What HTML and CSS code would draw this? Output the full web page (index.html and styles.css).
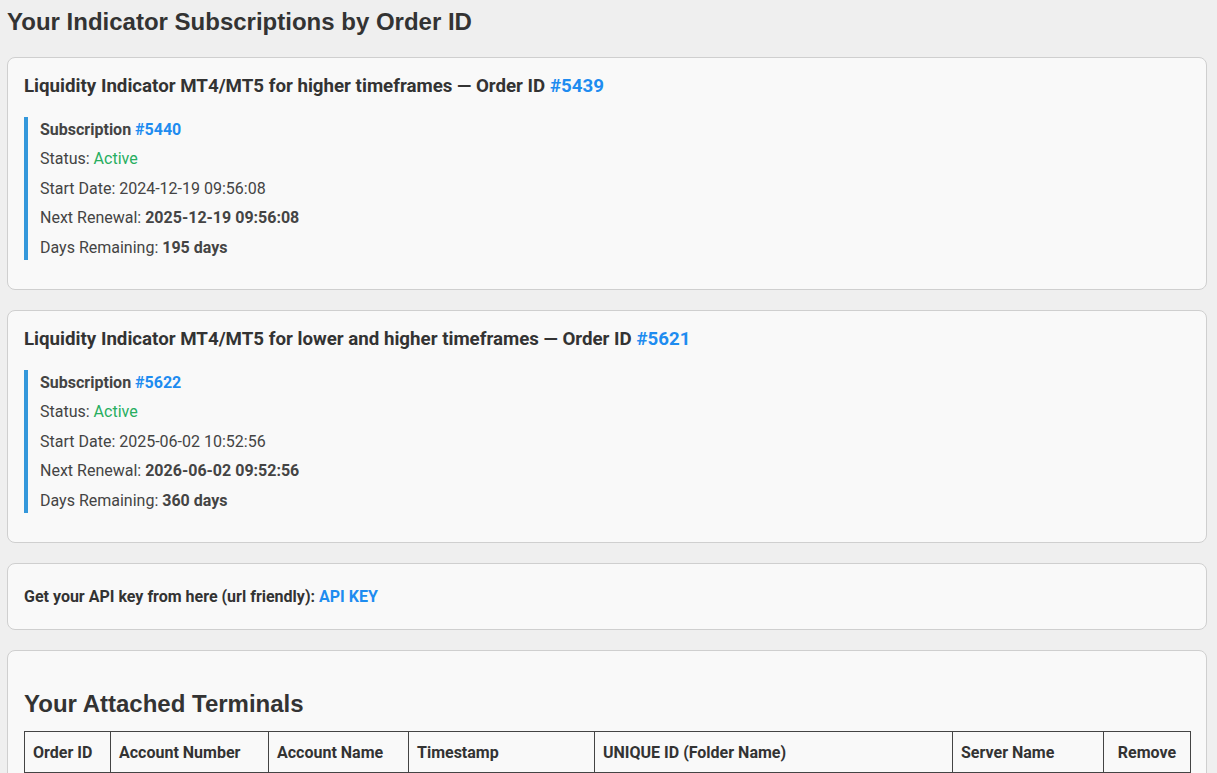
FILE: index.html
```html
<!DOCTYPE html>
<html lang="en">
<head>
<meta charset="utf-8">
<title>Your Indicator Subscriptions by Order ID</title>
<link rel="stylesheet" href="styles.css">
</head>
<body>
<div class="page">
  <h1 class="page-title">Your Indicator Subscriptions by Order ID</h1>

  <section class="card order">
    <h3 class="order-title">Liquidity Indicator MT4/MT5 for higher timeframes — Order ID <a href="#" class="link">#5439</a></h3>
    <div class="sub">
      <p class="line"><strong>Subscription <a href="#" class="link">#5440</a></strong></p>
      <p class="line">Status: <span class="active">Active</span></p>
      <p class="line">Start Date: 2024-12-19 09:56:08</p>
      <p class="line">Next Renewal: <strong>2025-12-19 09:56:08</strong></p>
      <p class="line">Days Remaining: <strong>195 days</strong></p>
    </div>
  </section>

  <section class="card order">
    <h3 class="order-title">Liquidity Indicator MT4/MT5 for lower and higher timeframes — Order ID <a href="#" class="link">#5621</a></h3>
    <div class="sub">
      <p class="line"><strong>Subscription <a href="#" class="link">#5622</a></strong></p>
      <p class="line">Status: <span class="active">Active</span></p>
      <p class="line">Start Date: 2025-06-02 10:52:56</p>
      <p class="line">Next Renewal: <strong>2026-06-02 09:52:56</strong></p>
      <p class="line">Days Remaining: <strong>360 days</strong></p>
    </div>
  </section>

  <section class="card api">
    <p class="api-text"><strong>Get your API key from here (url friendly): <a href="#" class="link">API KEY</a></strong></p>
  </section>

  <section class="card terminals">
    <h2 class="section-title">Your Attached Terminals</h2>
    <table class="term-table">
      <thead>
        <tr>
          <th class="c-order">Order ID</th>
          <th class="c-accnum">Account Number</th>
          <th class="c-accname">Account Name</th>
          <th class="c-time">Timestamp</th>
          <th class="c-uid">UNIQUE ID (Folder Name)</th>
          <th class="c-server">Server Name</th>
          <th class="c-remove">Remove</th>
        </tr>
      </thead>
    </table>
  </section>
</div>
</body>
</html>
```
FILE: styles.css
```css
html, body {
  margin: 0;
  padding: 0;
  background: #efefef;
}
body {
  font-family: Roboto, "Liberation Sans", Arial, sans-serif;
  color: #444;
  font-size: 16px;
}
.page {
  width: 1200px;
  padding: 8px 0 0 7px;
}
.page-title {
  font-family: "Liberation Sans", Arial, sans-serif;
  font-size: 24px;
  font-weight: bold;
  color: #333;
  margin: 0 0 21px;
  line-height: 28px;
}
.card {
  background: #f9f9f9;
  border: 1px solid #cfcfcf;
  border-radius: 8px;
  padding: 16px;
  margin-bottom: 20px;
}
.order {
  padding-bottom: 29.5px;
}
.order-title {
  font-size: 18.72px;
  font-weight: bold;
  color: #333;
  line-height: 22px;
  margin: 1px 0 20px;
}
.link {
  color: #1e8cf0;
  text-decoration: none;
}
.sub {
  border-left: 4px solid #3498db;
  padding-left: 12px;
  display: flex;
  flex-direction: column;
  gap: 5px;
}
.line {
  margin: 0;
  line-height: 24.5px;
  padding-top: 0.5px;
  margin-bottom: -0.5px;
}
.line strong {
  font-weight: bold;
}
.active {
  color: #27ae60;
}
.api-text {
  margin: 0;
  line-height: 33px;
  color: #333;
}
.terminals {
  padding-bottom: 40px;
}
.section-title {
  font-family: "Liberation Sans", Arial, sans-serif;
  font-size: 24px;
  font-weight: bold;
  color: #333;
  line-height: 28px;
  margin: 23px 0 13px;
}
.term-table {
  width: 100%;
  table-layout: fixed;
  border-collapse: collapse;
  border: 1px solid #444;
}
.term-table th {
  box-sizing: border-box;
  border: 1px solid #444;
  padding: 9px 8px 7px;
  text-align: left;
  font-weight: bold;
  font-size: 16px;
  line-height: 24px;
  color: #333;
}
.term-table th.c-remove {
  text-align: center;
}
.c-order { width: 86px; }
.c-accnum { width: 158px; }
.c-accname { width: 140px; }
.c-time { width: 186px; }
.c-uid { width: 358px; }
.c-server { width: 151px; }
.c-remove { width: 87px; }
```
